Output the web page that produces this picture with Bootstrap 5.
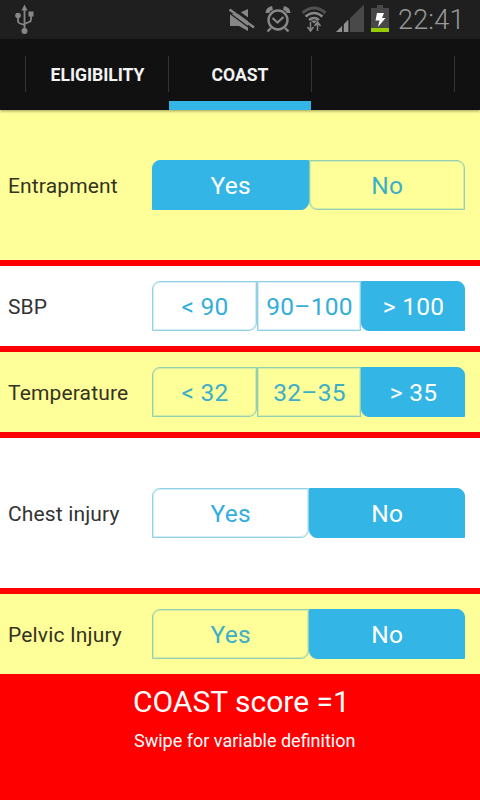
<!DOCTYPE html>
<html lang="en">
<head>
<meta charset="utf-8">
<meta name="viewport" content="width=device-width, initial-scale=1">
<title>COAST score</title>
<link href="https://cdn.jsdelivr.net/npm/bootstrap@5.3.0/dist/css/bootstrap.min.css" rel="stylesheet">
<style>
body{font-family:Roboto,"Liberation Sans",sans-serif;background:red;height:800px;overflow:hidden}
.statusbar{height:39px;background:#1f1f1f;color:#8d8d8d}
.statusbar svg{display:block;flex:none;margin-right:-82px}
.clock{font-size:27px;line-height:38px;font-weight:300;letter-spacing:.2px;color:#999}
.tabs{height:71px;background:#111;box-shadow:0 1px 3px rgba(0,0,0,.4);z-index:1}
.tabs .nav-link{width:143px;height:71px;padding:2px 0 0;color:#f3f3f3;font-weight:700;font-size:17.6px;letter-spacing:-.05px;border-bottom:9px solid transparent;line-height:69px;border-radius:0}
.tabs .nav-link.active{border-color:#33b5e5;width:142px;margin-right:1px}
.tabs .rule{width:1px;height:36px;margin:17px 0 0 -1px;background:#353535;position:relative}
.tabs .rule:first-child{margin-left:25px}
.question{height:86px;padding:0 15px 0 8px;border-bottom:6px solid red;background:#fff}
.question.tall{height:156px}
.question.final{height:80px;border:0}
.question.tint{background:#ff9}
.caption{width:144px;font-size:21px;letter-spacing:.15px;color:#333;white-space:nowrap;padding-top:3px}
.tint .caption{color:#33331f}
.choices{height:50px;width:313px}
.choices .btn{flex:1 1 0;min-width:0;padding:2px 0 0 1px;font-size:24.5px;line-height:46px;letter-spacing:.25px;color:#33aeda;border:1px solid #93d2e4;box-shadow:inset 0 0 0 1px rgba(147,210,228,.4);border-radius:0;white-space:nowrap;background:transparent}
.choices.three .btn:first-child{flex:0 0 105px}
.tint .choices .btn{border-color:#94cfb1;color:#3bafc9;box-shadow:inset 0 0 0 1px rgba(148,207,177,.4)}
.choices .btn:first-child{border-radius:8px 0 8px 0}
.choices .btn:last-child{border-radius:0 8px 0 8px}
.choices .btn.active,.tint .choices .btn.active{background:#33b5e5;border-color:#33b5e5;color:#fff;box-shadow:none}
.score{height:126px;color:#fff;padding-left:133px;white-space:nowrap}
.score h1{font-size:30px;line-height:36px;font-weight:400;padding-top:10px;letter-spacing:0}
.score p{font-size:18px;line-height:24px;padding-top:9px;padding-left:1px}
</style>
</head>
<body>
<header class="statusbar d-flex align-items-center">
  <svg width="480" height="39" viewBox="0 0 480 39" fill="none" stroke="#878787">
    <g stroke-width="1.8"><path d="M24.500 9v22M18 16v5q0 2 2 2.500l4.500 1.500M31 14v5.500q0 2-2 2.500l-4.500 2"/></g>
    <g fill="#878787" stroke="none"><path d="M24.500 4.500l3 6h-6zM28.500 11.500h5v5h-5z"/><circle cx="18" cy="15.500" r="2.800"/><circle cx="24.500" cy="31" r="3"/>
    <path d="M230 14h7l11-5v22l-9-5h-9z"/></g>
    <path d="M231 7L256 25" stroke="#1f1f1f" stroke-width="3"/><path d="M229.500 9.500L254 27.500" stroke-width="2.600"/><path d="M228 12L252 29.800" stroke="#1f1f1f" stroke-width="1.300"/>
    <circle cx="278" cy="20" r="9.500" stroke-width="2.400"/><path d="M272.500 18l5 4.500 6-5.500" stroke-width="2.200"/><path d="M267.500 13q0-4 5-5M288.500 13q0-4-5-5" stroke-width="4"/><path d="M271 28l-3.500 3.500M285 28l3.500 3.500" stroke-width="2.400"/>
    <path d="M302.500 13q11.500-10 23 0" stroke="#505050" stroke-width="3"/><path d="M305.500 16.500q8.500-7 17 0M309 20q5-4 10 0" stroke-width="2.500"/><path d="M310.500 20.500h7l-3.500 3z" fill="#878787" stroke="none"/>
    <g stroke-width="1.500"><path d="M310.500 22v8M307.500 27l3 4 3-4M317.500 31v-8M314.500 26l3-4 3 4"/></g>
    <path d="M336 32L364 4.500V32z" fill="#494949" stroke="none"/><path d="M336 32l6-6v6zM343.500 32v-7.500l5-5V32z" fill="#919191" stroke="none"/><path d="M343 24v8M349.200 18v14" stroke="#171717" stroke-width="1.200"/>
    <path d="M377 5h6v3h6v20h-18V8h6z" fill="#484848" stroke="none"/><path d="M371 28h18v4h-18z" fill="#9c0" stroke="none"/><path d="M377 13h7l-2 5h3.500l-7.500 9 1.500-6.500h-4z" fill="#fff" stroke="none"/>
  </svg>
  <span class="clock">22:41</span>
</header>
<nav class="tabs nav position-relative flex-nowrap">
  <span class="rule"></span>
  <a class="nav-link text-center" href="#">ELIGIBILITY</a>
  <span class="rule"></span>
  <a class="nav-link active text-center" href="#">COAST</a>
  <span class="rule"></span>
  <span class="nav-link"></span>
  <span class="rule"></span>
</nav>
<main>
  <section class="question tall tint d-flex align-items-center"><span class="caption">Entrapment</span>
    <div class="choices d-flex"><button class="btn active">Yes</button><button class="btn">No</button></div></section>
  <section class="question d-flex align-items-center"><span class="caption">SBP</span>
    <div class="choices three d-flex"><button class="btn">&lt; 90</button><button class="btn">90–100</button><button class="btn active">&gt; 100</button></div></section>
  <section class="question tint d-flex align-items-center"><span class="caption">Temperature</span>
    <div class="choices three d-flex"><button class="btn">&lt; 32</button><button class="btn">32–35</button><button class="btn active">&gt; 35</button></div></section>
  <section class="question tall d-flex align-items-center"><span class="caption">Chest injury</span>
    <div class="choices d-flex"><button class="btn">Yes</button><button class="btn active">No</button></div></section>
  <section class="question final tint d-flex align-items-center"><span class="caption">Pelvic Injury</span>
    <div class="choices d-flex"><button class="btn">Yes</button><button class="btn active">No</button></div></section>
</main>
<footer class="score"><h1 class="mb-0">COAST score =1</h1><p class="mb-0">Swipe for variable definition</p></footer>
<script src="https://cdn.jsdelivr.net/npm/bootstrap@5.3.0/dist/js/bootstrap.bundle.min.js"></script>
</body>
</html>
